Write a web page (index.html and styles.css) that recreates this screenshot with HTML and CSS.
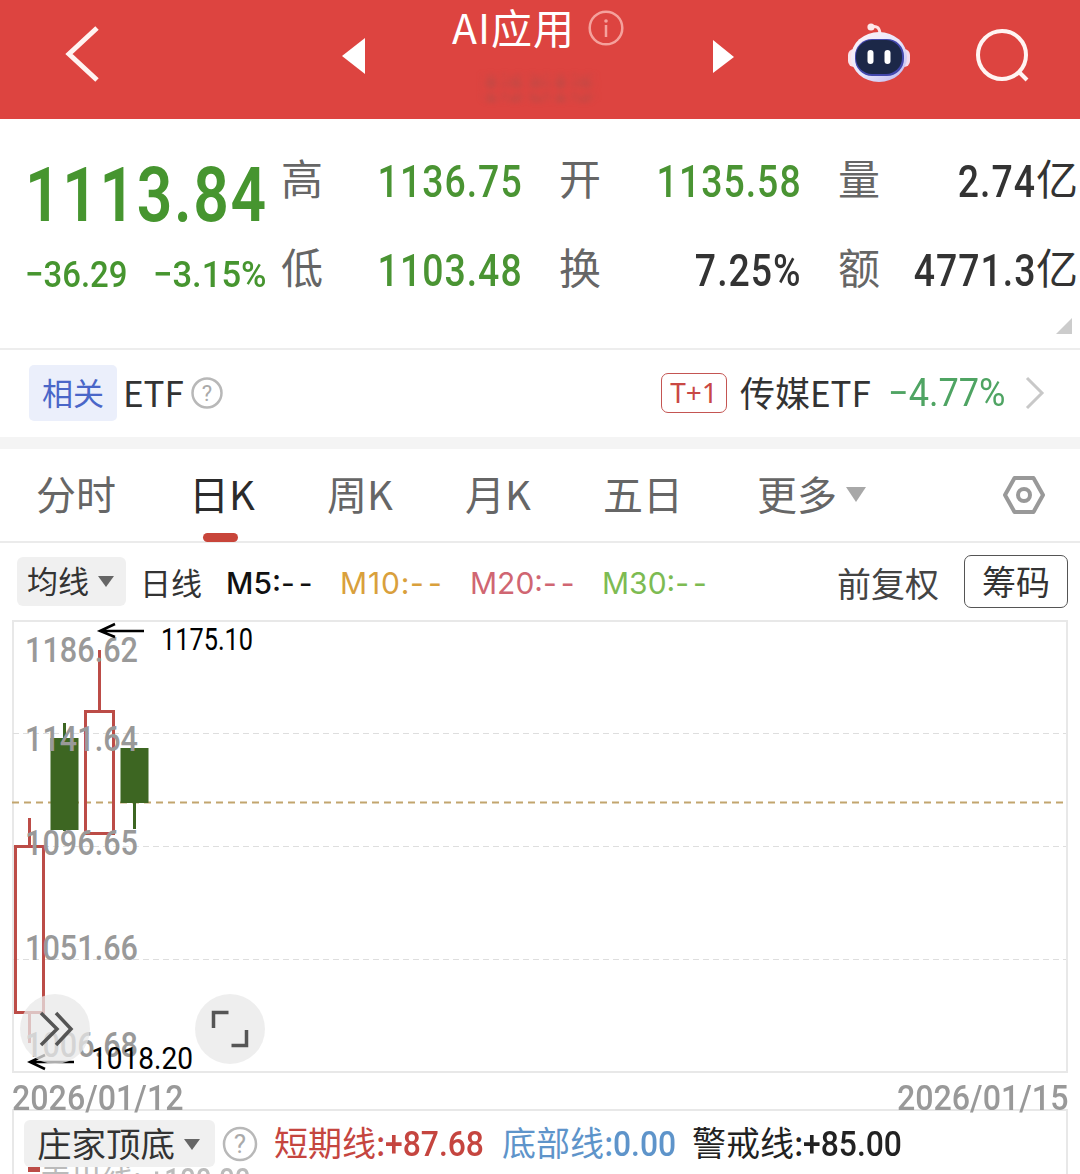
FILE: index.html
```html
<!DOCTYPE html>
<html lang="zh-CN">
<head>
    <meta charset="UTF-8">
    <meta name="viewport" content="width=device-width, initial-scale=1.0">
    <title>AI应用</title>
    <link rel="stylesheet" href="styles.css">
</head>
<body>
    <header class="header">
        <svg class="back" width="36" height="58" viewBox="0 0 36 58"><path d="M32 3L4 29l28 26" /></svg>
        <svg class="prev" width="24" height="36" viewBox="0 0 24 36"><path d="M0 18L23 0v36z" /></svg>
        <div class="title-box">
            <div class="title">
                <span>AI应用</span>
                <svg width="36" height="36" viewBox="0 0 36 36">
                    <circle cx="18" cy="18" r="16.3" />
                    <path d="M18 15v12" />
                    <circle class="dot" cx="18" cy="11" r="1.8" />
                </svg>
            </div>
            <div class="smudge"></div>
        </div>
        <svg class="next" width="22" height="34" viewBox="0 0 22 34"><path d="M0 0l21 17L0 33z" /></svg>
        <svg class="robot" width="64" height="62" viewBox="0 0 64 62">
            <defs>
                <linearGradient id="shell" x1="0" y1="0" x2="1" y2="1">
                    <stop offset="0" stop-color="#fff4f6" />
                    <stop offset=".55" stop-color="#e6e4fb" />
                    <stop offset="1" stop-color="#b9b4ef" />
                </linearGradient>
            </defs>
            <path d="M24 5c6-2 9 1 9 8" fill="none" stroke="#fde3e6" stroke-width="3" />
            <circle cx="24" cy="5" r="3.6" fill="#fde9eb" />
            <rect x="1" y="27" width="12" height="18" rx="6" fill="#fbe3ea" />
            <rect x="51" y="27" width="12" height="18" rx="6" fill="#f3dcef" />
            <ellipse cx="32" cy="35" rx="28" ry="25" fill="url(#shell)" />
            <rect x="8" y="17" width="49" height="37" rx="17" fill="#4348ad" />
            <rect x="9" y="18" width="46" height="34" rx="16" fill="#1c2848" />
            <rect x="20.500" y="28" width="6" height="14" rx="3" fill="#fff" />
            <rect x="37.500" y="28" width="6" height="14" rx="3" fill="#fff" />
        </svg>
        <svg class="search" width="56" height="56" viewBox="0 0 56 56">
            <circle cx="27" cy="27" r="24" />
            <path d="M43 43l9 9" />
        </svg>
    </header>

    <section class="quote">
        <div class="quote-main">
            <div class="price"><span class="din">1113.84</span></div>
            <div class="change">
                <span class="din">−36.29</span>
                <span class="din pct">−3.15%</span>
            </div>
        </div>
        <div class="stats">
            <div class="stat"><span class="label">高</span><span class="din value green">1136.75</span></div>
            <div class="stat"><span class="label">开</span><span class="din value green">1135.58</span></div>
            <div class="stat"><span class="label">量</span><span class="din">2.74</span><span class="unit">亿</span></div>
            <div class="stat"><span class="label">低</span><span class="din value green">1103.48</span></div>
            <div class="stat"><span class="label">换</span><span class="din value">7.25%</span></div>
            <div class="stat"><span class="label">额</span><span class="din">4771.3</span><span class="unit">亿</span></div>
        </div>
        <div class="corner"></div>
    </section>

    <section class="related">
        <span class="tag">相关</span>
        <span class="etf">ETF</span>
        <svg class="help" width="32" height="32" viewBox="0 0 32 32">
            <circle cx="16" cy="16" r="14.500" />
            <text x="16" y="23.500" text-anchor="middle" font-size="22">?</text>
        </svg>
        <span class="t1">T+1</span>
        <span class="etf-name">传媒ETF</span>
        <span class="din etf-change">−4.77%</span>
        <svg class="more" width="20" height="34" viewBox="0 0 20 34"><path d="M2 2l15 15L2 32" /></svg>
    </section>

    <nav class="tabs">
        <span class="tab">分时</span>
        <span class="tab active">日K</span>
        <span class="tab">周K</span>
        <span class="tab">月K</span>
        <span class="tab">五日</span>
        <span class="tab">更多<i class="caret"></i></span>
        <svg class="settings" width="44" height="40" viewBox="0 0 44 40">
            <path d="M12.500 3h19L41 20l-9.500 17h-19L3 20z" />
            <circle cx="22" cy="20" r="6" />
        </svg>
    </nav>

    <div class="ma-bar">
        <span class="select">均线<i class="caret"></i></span>
        <span class="period">日线</span>
        <span class="ma m5">M5:<b>--</b></span>
        <span class="ma m10">M10:<b>--</b></span>
        <span class="ma m20">M20:<b>--</b></span>
        <span class="ma m30">M30:<b>--</b></span>
        <span class="adjust">前复权</span>
        <span class="chips">筹码</span>
    </div>

    <svg class="chart" width="1080" height="454" viewBox="0 620 1080 454">
        <rect class="frame" x="13" y="621" width="1054" height="451" />
        <path class="grid" d="M13 733.500H1066M13 846.500H1066M13 959.500H1066" />
        <path class="last" d="M12 802.500H1063" />

        <!-- K线 -->
        <g class="up">
            <path d="M29.500 818v28M29.500 1013v30" />
            <rect x="15.500" y="846.500" width="28" height="166" />
            <path d="M99.500 650v61" />
            <rect x="85.500" y="711.500" width="28" height="122" />
        </g>
        <g class="down">
            <rect x="63" y="723" width="3" height="108" />
            <rect x="50.500" y="738" width="28" height="92" />
            <rect x="120.500" y="748" width="28" height="55" />
            <rect x="133" y="803" width="3" height="26" />
        </g>

        <g class="axis">
            <text x="25" y="662" textLength="113" lengthAdjust="spacingAndGlyphs">1186.62</text>
            <text x="25" y="751" textLength="113" lengthAdjust="spacingAndGlyphs">1141.64</text>
            <text x="25" y="855" textLength="113" lengthAdjust="spacingAndGlyphs">1096.65</text>
            <text x="25" y="960" textLength="113" lengthAdjust="spacingAndGlyphs">1051.66</text>
            <text x="25" y="1057" textLength="113" lengthAdjust="spacingAndGlyphs">1006.68</text>
        </g>

        <g class="mark">
            <path d="M144 631H100M115 624l-15 7 15 6" />
            <text x="161" y="650" textLength="92" lengthAdjust="spacingAndGlyphs">1175.10</text>
            <path d="M74 1062H30M45 1055l-15 7 15 7" />
            <text x="91" y="1069" textLength="102" lengthAdjust="spacingAndGlyphs">1018.20</text>
        </g>

        <g class="tool">
            <circle cx="55" cy="1029" r="35" />
            <path d="M41 1013l16 16-16 16M56 1013l15 16-15 16" />
            <circle cx="230" cy="1029" r="35" />
            <path d="M213.500 1028v-15.500h15M246.500 1030v15.500h-15" />
        </g>
    </svg>

    <div class="dates">
        <span class="din">2026/01/12</span>
        <span class="din end">2026/01/15</span>
    </div>

    <div class="indicator">
        <div class="indicator-row">
            <span class="select wide">庄家顶底<i class="caret"></i></span>
            <svg class="help" width="36" height="36" viewBox="0 0 36 36">
                <circle cx="18" cy="18" r="16" />
                <text x="18" y="27" text-anchor="middle" font-size="26">?</text>
            </svg>
            <span class="line short">短期线:<span class="din">+87.68</span></span>
            <span class="line bottom">底部线:<span class="din">0.00</span></span>
            <span class="line warn">警戒线:<span class="din">+85.00</span></span>
        </div>
        <div class="sell"><i></i>卖出线: <span class="din">+100.00</span></div>
    </div>
</body>
</html>
```
FILE: styles.css
```css
* {
    box-sizing: border-box;
}

body {
    margin: 0;
    width: 1080px;
    height: 1174px;
    overflow: hidden;
    background: #fff;
    color: #333;
    font-family: "Noto Sans CJK SC", sans-serif;
}

svg {
    display: block;
    flex: none;
}

span {
    white-space: nowrap;
}

/* 窄体数字 */
.din {
    display: inline-block;
    font-family: Roboto, "Liberation Sans", sans-serif;
    font-weight: 500;
    transform: scaleX(0.89);
    transform-origin: left center;
}

.green {
    color: #4a9433;
}

/* 顶部 */
.header {
    display: flex;
    align-items: flex-start;
    height: 119px;
    background: #dd4440;
}

.header > svg {
    fill: none;
    stroke: #fff4f2;
    stroke-width: 5;
}

.header .back {
    margin: 25px 0 0 65px;
}

.header .prev,
.header .next {
    fill: #fff;
    stroke: none;
}

.header .prev {
    margin: 38px 0 0 241px;
}

.header .next {
    margin: 40px 0 0 57px;
}

.header .robot {
    margin: 22px 0 0 112px;
    stroke: none;
}

.header .search {
    margin: 28px 0 0 64px;
    stroke-width: 4;
}

.title-box {
    width: 204px;
    margin-left: 86px;
}

.title {
    display: flex;
    align-items: center;
    height: 56px;
    gap: 13px;
    font-size: 41px;
    letter-spacing: 1px;
    color: #fff;
}

.title span {
    line-height: 50px;
    padding-bottom: 4px;
}

.title svg {
    fill: none;
    stroke: #f5a19c;
    stroke-width: 2.5;
}

.title .dot {
    fill: #f5a19c;
    stroke: none;
}

.smudge {
    width: 118px;
    height: 30px;
    margin: 17px 0 0 28px;
    background:
        radial-gradient(circle at 50% 50%, rgba(160, 80, 75, 0.3), transparent 60%) 0 0 / 23px 19px,
        radial-gradient(circle at 40% 60%, rgba(180, 75, 72, 0.3), transparent 70%) 5px 4px / 14px 12px;
    filter: blur(2px);
}

/* 行情 */
.quote {
    display: flex;
    position: relative;
    height: 231px;
    border-bottom: 2px solid #ededed;
}

.quote-main {
    width: 281px;
    padding: 24px 0 0 25px;
    color: #46952f;
}

.price {
    height: 97px;
    line-height: 90px;
    font-size: 76px;
}

.price .din {
    font-weight: 600;
    letter-spacing: 2px;
    transform: scaleX(0.82);
}

.change {
    display: flex;
    height: 70px;
    line-height: 70px;
    font-size: 37px;
}

.change .din {
    width: 129px;
}

.change .pct {
    transform: scaleX(0.935);
}

.stats {
    display: grid;
    grid-template-columns: 242px 243px 240px;
    grid-template-rows: 89px 89px;
    column-gap: 36px;
    padding-top: 14px;
}

.stat {
    display: flex;
    line-height: 89px;
}

.label {
    margin-right: auto;
    font-size: 42px;
    line-height: 87px;
    color: #666;
}

.stat .din {
    padding-top: 5px;
    font-size: 44px;
    letter-spacing: 1.2px;
    transform: scaleX(0.85);
    transform-origin: right center;
}

.unit {
    font-size: 42px;
    line-height: 87px;
}

.corner {
    position: absolute;
    right: 8px;
    bottom: 14px;
    border-left: 16px solid transparent;
    border-bottom: 16px solid #ccc;
}

/* 相关ETF */
.related {
    display: flex;
    align-items: center;
    height: 99px;
    padding: 0 35px 2px 29px;
    border-bottom: 12px solid #f4f4f4;
    font-size: 35px;
}

.tag {
    width: 88px;
    height: 56px;
    line-height: 53px;
    border-radius: 5px;
    background: #ebeffb;
    color: #4a66c8;
    font-size: 31px;
    text-align: center;
}

.etf {
    width: 68px;
    margin-left: 6px;
}

.etf,
.etf-name {
    padding-bottom: 2px;
}

.help circle {
    fill: none;
    stroke: #b8b8b8;
    stroke-width: 2.5;
}

.help text {
    fill: #aaa;
    font-family: Roboto, sans-serif;
}

.t1 {
    width: 66px;
    height: 40px;
    line-height: 37px;
    margin-left: auto;
    border: 1.5px solid #c45552;
    border-radius: 7px;
    color: #c94844;
    font-family: "Noto Sans", sans-serif;
    font-size: 28px;
    text-align: center;
}

.etf-name {
    width: 148px;
    margin-left: 13px;
}

.etf-change {
    width: 137px;
    color: #4fa463;
    font-size: 38px;
    font-weight: 400;
    transform: scaleX(0.95);
}

.more {
    fill: none;
    stroke: #c8c8c8;
    stroke-width: 3;
}

/* 周期切换 */
.tabs {
    display: grid;
    grid-template-columns: 153px 138px 138px 138px 154px 245px 44px;
    align-items: center;
    height: 94px;
    padding-left: 36px;
    border-bottom: 2px solid #ebebeb;
    font-size: 40px;
    color: #666;
}

.tab {
    position: relative;
    height: 92px;
    line-height: 89px;
}

.tab.active {
    color: #2b2b2b;
}

.tab.active::after {
    content: "";
    position: absolute;
    left: 14px;
    bottom: -1px;
    width: 35px;
    height: 9px;
    border-radius: 5px;
    background: #c8453a;
}

.caret {
    display: inline-block;
    margin: 0 0 7px 9px;
    border: 8px solid transparent;
    border-top: 11px solid #666;
    border-bottom: 0;
    vertical-align: middle;
}

.tab .caret {
    margin-bottom: 10px;
    border-width: 15px 10px 0;
    border-top-color: #a8a8a8;
}

.settings {
    fill: none;
    stroke: #999;
    stroke-width: 4;
    stroke-linejoin: round;
}

/* 均线 */
.ma-bar {
    display: flex;
    align-items: center;
    height: 77px;
    padding: 0 12px 0 17px;
    font-size: 31px;
}

.select {
    width: 109px;
    height: 49px;
    line-height: 46px;
    padding-left: 10px;
    border-radius: 6px;
    background: #f0f0f0;
}

.period {
    width: 86px;
    margin-left: 14px;
}

.ma {
    padding-top: 3px;
    font-family: Inter, sans-serif;
    font-size: 30px;
}

.ma b {
    font-weight: 400;
    letter-spacing: 4px;
}

.m5 {
    width: 114px;
    font-weight: 500;
    color: #111;
}

.m10 {
    width: 130px;
    letter-spacing: 0.8px;
    color: #d9a03c;
}

.m20 {
    width: 132px;
    color: #d06672;
}

.m30 {
    color: #7dbb52;
}

.adjust {
    margin-left: auto;
    padding-top: 2px;
    font-size: 34px;
    color: #444;
}

.chips {
    width: 104px;
    height: 53px;
    line-height: 50px;
    margin-left: 25px;
    border: 1.5px solid #555;
    border-radius: 7px;
    font-size: 34px;
    text-align: center;
}

/* 图表 */
.frame {
    fill: none;
    stroke: #e8e8e8;
    stroke-width: 2;
}

.grid {
    stroke: #dedede;
    stroke-dasharray: 6 4;
}

.last {
    stroke: #c2a56e;
    stroke-width: 2;
    stroke-dasharray: 7 5;
}

.up {
    fill: none;
    stroke: #bc4c47;
    stroke-width: 3;
}

.down {
    fill: #3d6622;
}

.axis text {
    fill: #999;
    font: 500 34.5px Roboto, sans-serif;
}

.mark path {
    fill: none;
    stroke: #000;
    stroke-width: 2.5;
}

.mark text {
    font: 400 31px Roboto, sans-serif;
}

.tool circle {
    fill: #e8e8e8;
    fill-opacity: 0.75;
}

.tool path {
    fill: none;
    stroke: #555;
    stroke-width: 3.5;
}

.dates {
    display: flex;
    justify-content: space-between;
    height: 35px;
    line-height: 50px;
    padding: 0 12px;
    font-size: 35px;
    color: #999;
}

.dates .din {
    transform: scaleX(0.92);
}

.dates .end {
    transform-origin: right center;
}

/* 副图指标 */
.indicator {
    height: 65px;
    margin: 0 12px;
    border: 2px solid #e8e8e8;
    border-bottom: 0;
    overflow: hidden;
}

.indicator-row {
    display: flex;
    align-items: center;
    position: relative;
    height: 65px;
    padding-left: 10px;
    font-size: 34px;
}

.select.wide {
    width: 191px;
    height: 47px;
    line-height: 44px;
    padding-left: 13px;
    font-size: 34.5px;
}

.indicator .help {
    margin: 0 16px 0 7px;
}

.line {
    padding-bottom: 4px;
}

.line .din {
    font-size: 35px;
    transform: scaleX(0.91);
}

.short {
    width: 228px;
    color: #c5453f;
}

.bottom {
    width: 190px;
    color: #5e94ca;
}

.warn {
    color: #222;
}

.sell {
    margin: -19px 0 0 14px;
    line-height: 40px;
    font-size: 31px;
    color: #bbb;
}

.sell i {
    display: inline-block;
    width: 12px;
    height: 5px;
    margin-bottom: 18px;
    background: #bc4c47;
}
```
